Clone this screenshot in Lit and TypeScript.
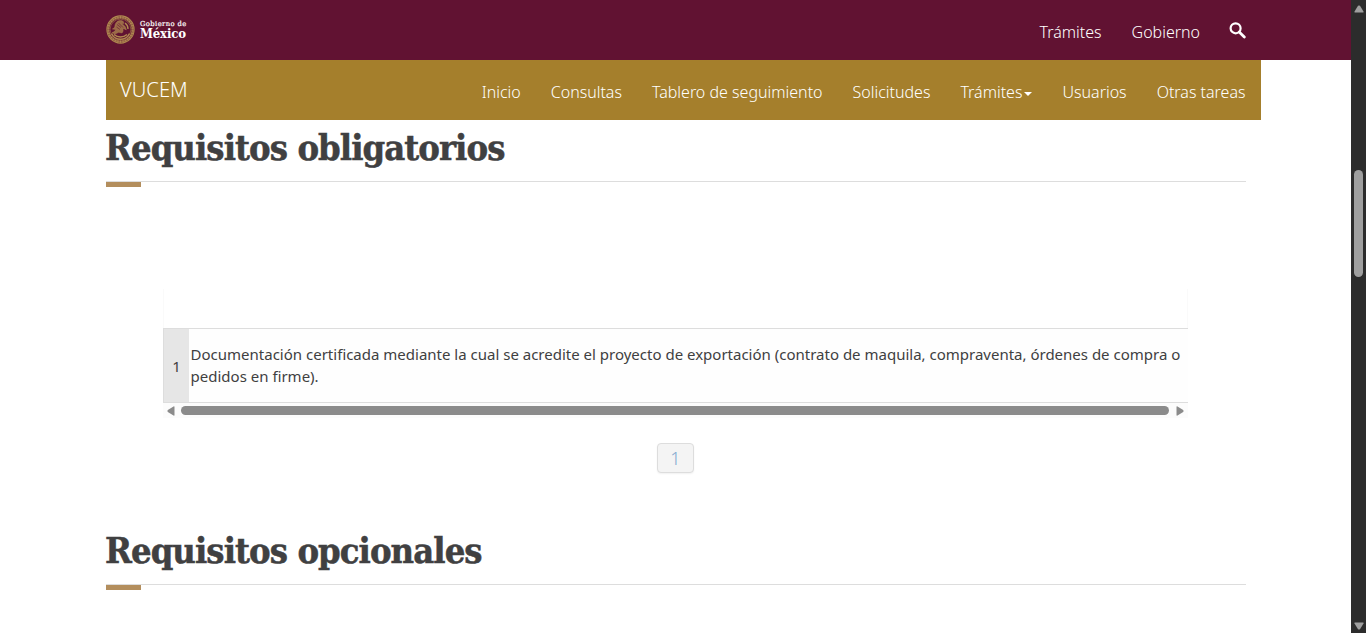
import { LitElement, html, css, svg } from "lit";
import { customElement, property } from "lit/decorators.js";

@customElement("mx-seal")
class MxSeal extends LitElement {
  static styles = css`
    :host { display: block; width: 29px; height: 29px; }
    svg { display: block; }
  `;
  render() {
    const ticks = Array.from({ length: 30 }, (_, i) => i * 12);
    return html`<svg width="29" height="29" viewBox="0 0 29 29" fill="none" stroke="#b08a50">
      <circle cx="14.5" cy="14.5" r="13.600" stroke-width="1.100"/>
      <circle cx="14.5" cy="14.5" r="12.100" stroke-width="2" stroke-opacity=".7"/>
      ${ticks.map(a => svg`<path d="M14.5 1.2v2.2" transform="rotate(${a} 14.5 14.5)" stroke-width="1"/>`)}
      <circle cx="14.5" cy="14.5" r="10.400" stroke-width=".5"/>
      <path d="M9 10c1-3.500 4-5 7-4.200 1.500.4 2.200 1.500 1.600 2.800l-2.100.2c2.500 1 4.500 3 4.800 6.200-1.500-1-2.500-1.400-3.600-1.300.8 1.500.5 3.300-.8 4.300l-3.200-.7-3.700 1.700-3-1.200c2-.7 3.200-1.800 3.700-3.200L6.400 14c1.700-.7 2.700-2 2.600-4z" fill="#b08a50" fill-opacity=".75" stroke-width=".4"/>
      <path d="M5.500 18.500c2 4.300 5.200 5.700 9 5.700s7-1.400 9-5.700M8 19.500c2 1.800 4.200 2.500 6.500 2.500s4.500-.7 6.500-2.500M19 8c2 1.500 3 3.500 3 6" stroke-width="1.400"/>
      <path d="M11 9.500l4 3M10.500 12l3.500 2.500M12.500 8l4.500 4.500" stroke="#611232" stroke-width=".6"/>
    </svg>`;
  }
}

@customElement("section-title")
class SectionTitle extends LitElement {
  @property() text = "";
  static styles = css`
    :host { display: block; width: 1140px; }
    h2 {
      margin: 0 0 0 -1px; height: 61px; line-height: 54px; box-sizing: border-box;
      font-family: "DejaVu Serif", serif; font-stretch: condensed; font-weight: 700;
      font-size: 36px; letter-spacing: -.93px; color: #404041; white-space: nowrap;
      -webkit-text-stroke: .5px #404041;
    }
    .rule { height: 6px; border-top: 1px solid #ddd; box-sizing: border-box; }
    .accent { width: 35px; height: 5px; background: #b38e5d; }
  `;
  render() {
    return html`<h2>${this.text}</h2>
      <div class="rule"><div class="accent"></div></div>`;
  }
}

@customElement("app-root")
class AppRoot extends LitElement {
  static styles = css`
    :host {
      display: flex; width: 1366px; height: 633px; overflow: hidden; background: #fff;
      font-family: "Noto Sans", sans-serif; color: #404041;
    }
    .page { width: 1351px; display: flex; flex-direction: column; }
    .gov { height: 60px; background: #611232; display: flex; align-items: center; padding: 0 105px 0 106px; flex: none; }
    .brand { display: flex; gap: 5px; align-items: center; color: #fff; flex: 1; font-family: "DejaVu Serif", serif; padding-bottom: 1px; }
    .name { display: flex; flex-direction: column; white-space: nowrap; padding-top: 1px; }
    .small { font-size: 6.8px; line-height: 7px; letter-spacing: .4px; -webkit-text-stroke: .2px #fff; }
    .big { font-size: 13px; line-height: 12px; font-weight: 700; font-stretch: condensed; letter-spacing: -.15px; }
    .links { display: flex; gap: 30px; font-size: 16px; font-weight: 300; line-height: 24px; color: #fff; white-space: nowrap; padding-top: 4px; }
    .search { width: 17px; height: 17px; margin: 2px 0 0 -1px; display: block; }
    .bar { margin-left: 106px; width: 1155px; height: 60px; box-sizing: border-box; background: #a57f2c; display: flex; align-items: center; justify-content: space-between; padding: 0 15.5px 0 14px; flex: none; }
    .title { color: #fff; font-size: 20.2px; font-weight: 300; line-height: 28px; padding-bottom: 3px; }
    .drop { display: flex; align-items: center; gap: 2px; }
    .caret { border: 4px solid transparent; border-top-color: #fff; border-bottom: 0; margin-top: 4px; }
    .content { padding-left: 106px; }
    .table { margin: 102px 0 0 57px; width: 1025px; }
    .head { height: 39px; border: solid #fafafa; border-width: 0 1px; box-sizing: border-box; }
    .row { display: flex; height: 75px; box-sizing: border-box; border: solid #ddd; border-width: 1px 0; font-size: 15px; line-height: 22px; background: #fefefe; }
    .num { width: 26px; box-sizing: border-box; border-left: 1px solid #ddd; background: #e6e6e6; display: flex; align-items: center; justify-content: center; }
    .cell { flex: 1; padding: 14px 0 0 1.6px; white-space: nowrap; }
    .hscroll { height: 15px; background: #fcfcfc; display: flex; align-items: center; padding: 0 4px; justify-content: space-between; }
    .thumb { width: 988px; height: 9px; border-radius: 5px; background: #8b8b8b; margin-right: 1px; }
    .arrow { display: block; }
    .pager { display: flex; width: 1139px; justify-content: center; margin: 25px 0 50px; }
    .pg { width: 37px; height: 30px; box-sizing: border-box; border: 1px solid #ddd; border-radius: 4px; background: #f4f4f4; color: #7fa9cf; font-size: 18px; font-weight: 300; line-height: 29px; text-align: center; box-shadow: 0 1px 2px rgba(0,0,0,.06); }
    .vscroll { width: 15px; background: #2c2c2c; display: flex; flex-direction: column; align-items: center; box-sizing: border-box; padding: 5px 0 3px; flex: none; }
    .vthumb { width: 9px; height: 107px; border-radius: 5px; background: #9f9f9f; margin: 157px 0 auto; }
  `;
  render() {
    const before = ["Inicio", "Consultas", "Tablero de seguimiento", "Solicitudes"];
    const after = ["Usuarios", "Otras tareas"];
    return html`
      <div class="page">
        <header class="gov">
          <div class="brand"><mx-seal></mx-seal>
            <div class="name"><span class="small">Gobierno de</span><span class="big">México</span></div>
          </div>
          <nav class="links"><span>Trámites</span><span>Gobierno</span>
            <svg class="search" viewBox="0 0 17 17" fill="none" stroke="#fff"><circle cx="6.600" cy="6.300" r="5" stroke-width="2.200"/><path d="M10.200 10l5.100 5" stroke-width="2.800" stroke-linecap="round"/></svg>
          </nav>
        </header>
        <div class="bar">
          <span class="title">VUCEM</span>
          <nav class="links">
            ${before.map(t => html`<span>${t}</span>`)}
            <span class="drop">Trámites<i class="caret"></i></span>
            ${after.map(t => html`<span>${t}</span>`)}
          </nav>
        </div>
        <main class="content">
          <section-title text="Requisitos obligatorios"></section-title>
          <div class="table">
            <div class="head"></div>
            <div class="row">
              <div class="num">1</div>
              <div class="cell">Documentación certificada mediante la cual se acredite el proyecto de exportación (contrato de maquila, compraventa, órdenes de compra o<br>pedidos en firme).</div>
            </div>
            <div class="hscroll">
              <svg class="arrow" width="8" height="10"><path d="M6.500.5Q7.500 0 7.500 1v8q0 1-1 .5L.8 6Q0 5 .8 4z" fill="#8b8b8b"/></svg>
              <div class="thumb"></div>
              <svg class="arrow" width="8" height="10"><path d="M.5 1Q.5 0 1.500.5L7.200 4Q8 5 7.200 6L1.500 9.500Q.5 10 .5 9z" fill="#8b8b8b"/></svg>
            </div>
          </div>
          <div class="pager"><span class="pg">1</span></div>
          <section-title text="Requisitos opcionales"></section-title>
        </main>
      </div>
      <div class="vscroll">
        <svg class="arrow" width="10" height="8"><path d="M1 7.500Q0 7.500.5 6.500L4 .8Q5 0 6 .8L9.500 6.500Q10 7.500 9 7.500z" fill="#9f9f9f"/></svg>
        <div class="vthumb"></div>
        <svg class="arrow" width="10" height="8"><path d="M1 .5Q0 .5.5 1.500L4 7.200Q5 8 6 7.200L9.500 1.500Q10 .5 9 .5z" fill="#9f9f9f"/></svg>
      </div>`;
  }
}
